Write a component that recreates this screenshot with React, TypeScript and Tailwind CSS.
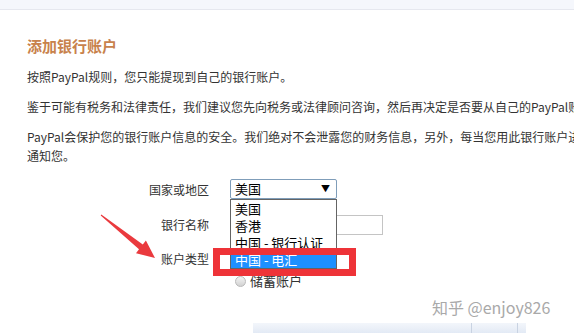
import React from "react";

const options = ["美国", "香港", "中国 - 银行认证", "中国 - 电汇"];

function Radio() {
  return (
    <span className="inline-block h-[11px] w-[11px] rounded-full border border-[#b9b9b9] bg-gradient-to-b from-[#f4f4f4] to-[#d2d2d2]" />
  );
}

export default function App() {
  return (
    <div className="relative h-[333px] w-[574px] overflow-hidden bg-white font-['Noto_Sans_CJK_SC',sans-serif] text-[12px] text-[#333]">
      <div className="h-[10px] border-b border-[#e6e8ef] bg-[#f5f7fc]" />

      <div className="pl-[27px] pt-[26px]">
        <h2 className="text-[15px] font-bold leading-[20px] text-[#c8824c]">
          添加银行账户
        </h2>
        <p className="mt-[11px] whitespace-nowrap leading-[19px]">
          按照PayPal规则，您只能提现到自己的银行账户。
        </p>
        <p className="mt-[11px] whitespace-nowrap leading-[19px]">
          鉴于可能有税务和法律责任，我们建议您先向税务或法律顾问咨询，然后再决定是否要从自己的PayPal账户提现。
        </p>
        <p className="mt-[11px] whitespace-nowrap leading-[19px]">
          PayPal会保护您的银行账户信息的安全。我们绝对不会泄露您的财务信息，另外，每当您用此银行账户进行交易时，我们都会通过电子邮件
          <br />
          通知您。
        </p>

        <div className="mt-[14px]">
          <div className="flex items-center">
            <span className="w-[182px] pt-[1px] text-right text-[12px]">国家或地区</span>
            <div className="relative ml-[21px]">
              <div className="flex h-[20px] w-[107px] items-center justify-between rounded-[2px] border border-[#7f9db9] bg-white pl-[4px] pr-[6px] text-[13px] text-black">
                <span>美国</span>
                <span className="text-[9px]">▼</span>
              </div>
              <ul className="absolute left-0 top-[20px] z-10 w-[107px] border border-[#646464] bg-white text-[13px] text-black">
                {options.map((o, i) => (
                  <li
                    key={o}
                    className={
                      i === 3
                        ? "h-[17px] bg-[#1e90ff] px-[4px] leading-[17px] text-white"
                        : "h-[17px] px-[4px] leading-[17px]"
                    }
                  >
                    {o}
                  </li>
                ))}
              </ul>
            </div>
          </div>

          <div className="mt-[16px] flex items-center">
            <span className="w-[182px] text-right">银行名称</span>
            <div className="ml-[21px] h-[20px] w-[153px] border border-[#c4c4c4] bg-white" />
          </div>

          <div className="mt-[13px] flex items-start">
            <span className="w-[182px] text-right leading-[22px]">账户类型</span>
            <div className="ml-[21px] flex flex-col text-[13px]">
              <label className="flex h-[22px] items-center gap-[4px] pl-[5px]">
                <Radio />
                支票账户
              </label>
              <label className="flex h-[22px] items-center gap-[4px] pl-[5px]">
                <Radio />
                储蓄账户
              </label>
            </div>
          </div>

          <div className="ml-[226px] mt-[31px] flex h-[10px] w-[273px] bg-gradient-to-b from-[#f3f6fb] to-[#e3eaf5]">
            <div className="w-[218px]" />
            <div className="w-[47px] border-x border-[#c9d3e2]" />
          </div>
        </div>
      </div>

      {/* annotation overlays */}
      <div className="absolute left-[213px] top-[248px] z-20 h-[28px] w-[143px] border-[7px] border-[#ee3338]" />
      <svg className="absolute left-0 top-0 z-20" width="574" height="333">
        <polygon
          points="100.7,215.4 139,249.3 136,253.2 155,258 145.9,240.6 142.8,244.5 101.3,214.6"
          fill="#ea3a3e"
        />
      </svg>

      <div className="absolute left-[432px] top-[295px] z-20 text-[16px] text-[#a9a9a9] [text-shadow:0_0_2px_#fff]">
        知乎 @enjoy826
      </div>
    </div>
  );
}
